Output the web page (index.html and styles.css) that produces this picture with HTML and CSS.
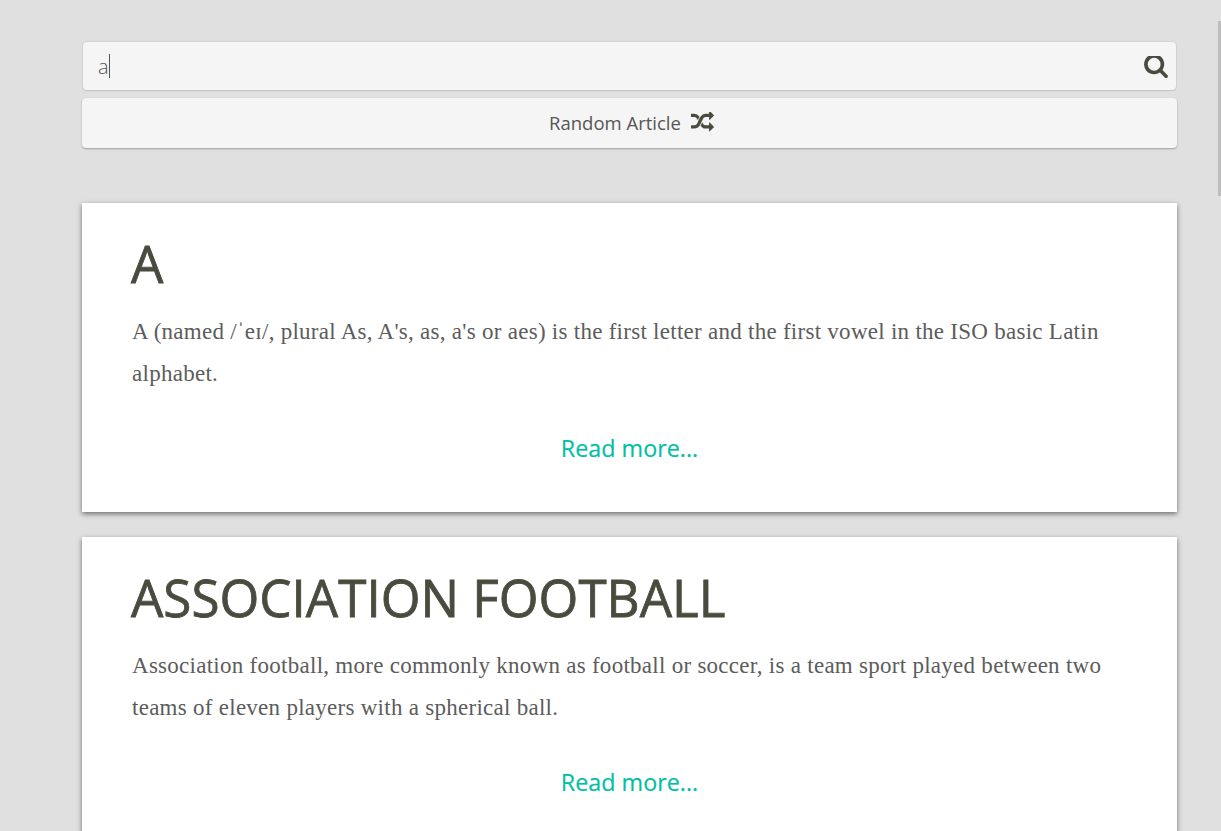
FILE: index.html
```html
<!DOCTYPE html>
<html lang="en">
<head>
    <meta charset="UTF-8">
    <meta name="viewport" content="width=device-width, initial-scale=1.0">
    <title>Wiki Search</title>
    <link rel="stylesheet" href="styles.css">
</head>
<body>
    <div class="page">
        <!-- Search -->
        <div class="search-box">
            <span class="search-text">a</span><span class="caret"></span>
            <svg class="search-icon" viewBox="0 128 1664 1536"><path d="M1152 704q0-185-131.500-316.500t-316.500-131.500-316.500 131.500-131.500 316.500 131.500 316.500 316.500 131.500 316.500-131.500 131.500-316.500zm512 832q0 52-38 90t-90 38q-54 0-90-38l-343-342q-179 124-399 124-143 0-273.500-55.500t-225-150-150-225-55.500-273.500 55.500-273.500 150-225 225-150 273.500-55.500 273.500 55.500 225 150 150 225 55.500 273.500q0 220-124 399l343 343q37 37 37 90z"/></svg>
        </div>
        <div class="random-btn">
            <span>Random Article</span>
            <svg class="random-icon" viewBox="0 128 1792 1536"><path d="M666 481q-60 92-137 273-22-45-37-72.500t-40.500-63.500-51-56.500-63-35-81.500-14.500h-224q-14 0-23-9t-9-23v-192q0-14 9-23t23-9h224q250 0 410 225zm1126 799q0 14-9 23l-320 320q-9 9-23 9-13 0-22.500-9.500t-9.500-22.500v-192q-32 0-85 .5t-81 1-73-1-71-5-64-10.500-63-18.500-58-28.500-59-40-55-53.500-56-69.500q59-93 136-273 22 45 37 72.500t40.500 63.500 51 56.500 63 35 81.500 14.500h256v-192q0-14 9-23t23-9q12 0 24 10l319 319q9 9 9 23zm0-896q0 14-9 23l-320 320q-9 9-23 9-13 0-22.500-9.500t-9.500-22.500v-192h-256q-48 0-87 15t-69 45-51 61.500-45 77.500q-32 62-78 171-29 66-49.500 111t-54 105-64 100-74 83-90 68.500-106.500 42-128 16.500h-224q-14 0-23-9t-9-23v-192q0-14 9-23t23-9h224q48 0 87-15t69-45 51-61.500 45-77.500q32-62 78-171 29-66 49.500-111t54-105 64-100 74-83 90-68.500 106.500-42 128-16.500h256v-192q0-14 9-23t23-9q12 0 24 10l319 319q9 9 9 23z"/></svg>
        </div>

        <!-- Results -->
        <div class="results">
            <div class="card">
                <h2>A</h2>
                <p>A (named /ˈeɪ/, plural As, A's, as, a's or aes) is the first letter and the first vowel in the ISO basic Latin alphabet.</p>
                <a class="read-more" href="#">Read more...</a>
            </div>
            <div class="card">
                <h2>ASSOCIATION FOOTBALL</h2>
                <p>Association football, more commonly known as football or soccer, is a team sport played between two teams of eleven players with a spherical ball.</p>
                <a class="read-more" href="#">Read more...</a>
            </div>
        </div>
    </div>
    <div class="scroll-thumb"></div>
</body>
</html>
```

FILE: styles.css
```css
* { margin: 0; padding: 0; box-sizing: border-box; }

html, body {
    height: 831px;
    overflow: hidden;
}

body {
    font-family: 'Open Sans', sans-serif;
    background: #e0e0e0;
    color: #4a4b3f;
}

.page {
    margin-left: 82px;
    width: 1095px;
    padding-top: 42px;
}

.search-box {
    display: flex;
    align-items: center;
    height: 48px;
    margin: 0 1px 8px;
    padding: 0 8px 0 15px;
    background: #f5f5f5;
    border-radius: 4px;
    box-shadow: 0 0 2px rgba(0,0,0,0.2), 0 1px 1px rgba(0,0,0,0.08);
}

.search-text {
    font-size: 20px;
    font-weight: 300;
    letter-spacing: -1px;
    color: #555;
}

.caret {
    width: 1px;
    height: 24px;
    margin-left: 1px;
    background: #555;
}

.search-icon {
    width: 24px;
    height: 22px;
    margin-top: 1px;
    margin-left: auto;
    fill: #4a4b3f;
}

.random-btn {
    display: flex;
    align-items: center;
    justify-content: center;
    gap: 10px;
    height: 50px;
    padding-left: 4px;
    padding-bottom: 2px;
    background: #f5f5f5;
    border-radius: 4px;
    font-size: 18.5px;
    color: #555;
    box-shadow: 0 1px 2px rgba(0,0,0,0.3);
}

.random-icon {
    width: 23px;
    height: 20px;
    fill: #4a4b3f;
}

.results {
    margin-top: 55px;
}

.card {
    background: #fff;
    height: 309px;
    margin-bottom: 25px;
    padding: 29px 50px 0;
    box-shadow: 0 2px 5px rgba(0,0,0,0.5);
}

.card h2 {
    margin-left: -1px;
    font-size: 51.2px;
    font-weight: 400;
    line-height: 62px;
    color: #4a4b3f;
    -webkit-text-stroke: 0.8px #4a4b3f;
}

.card p {
    margin-top: 17px;
    font-family: 'Liberation Serif', serif;
    font-size: 23px;
    letter-spacing: 0.27px;
    line-height: 41.5px;
    color: #5c5c5c;
}

.read-more {
    display: block;
    margin-top: 38px;
    text-align: center;
    font-size: 23.3px;
    line-height: 33px;
    color: #00bfa5;
    text-decoration: none;
    -webkit-text-stroke: 0.2px #00bfa5;
}

.scroll-thumb {
    position: fixed;
    top: 21px;
    right: 0;
    width: 3px;
    height: 175px;
    background: #bdbdbd;
}
```
